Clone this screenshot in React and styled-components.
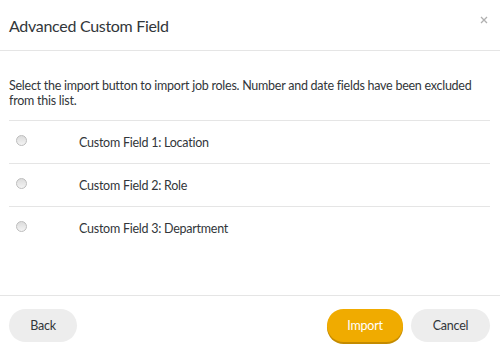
import React from "react";
import styled, { createGlobalStyle } from "styled-components";

const GlobalStyle = createGlobalStyle`
  html, body {
    margin: 0;
    padding: 0;
    background: #ffffff;
  }
  body {
    font-family: Lato, "Open Sans", sans-serif;
    color: #32363a;
  }
`;

const Dialog = styled.section`
  width: 500px;
  height: 354px;
  display: flex;
  flex-direction: column;
  background: #ffffff;
`;

const Header = styled.header`
  height: 51px;
  display: flex;
  align-items: center;
  justify-content: space-between;
  padding: 0 10px 0 9px;
  border-bottom: 1px solid #e5e5e5;
  box-sizing: border-box;
`;

const Title = styled.h1`
  margin: 0;
  font-size: 16px;
  letter-spacing: -0.3px;
  font-weight: 400;
  color: #32363a;
`;

const CloseButton = styled.button`
  border: 0;
  background: none;
  padding: 0;
  width: 12px;
  height: 12px;
  margin-top: -10px;
  display: flex;
  cursor: pointer;
`;

const Body = styled.div`
  flex: 1;
  padding: 27px 10px 0 9px;
`;

const Description = styled.p`
  margin: 0 0 12px;
  font-size: 12.5px;
  letter-spacing: -0.25px;
  line-height: 15px;
  color: #32363a;
`;

const List = styled.ul`
  list-style: none;
  margin: 0;
  padding: 0;
  border-top: 1px solid #e5e5e5;
`;

const Row = styled.li`
  height: 42px;
  display: flex;
  align-items: center;
  border-bottom: ${(p) => (p.$last ? "0" : "1px solid #e5e5e5")};
`;

const Radio = styled.span`
  width: 9px;
  height: 9px;
  margin-left: 7px;
  margin-right: 52px;
  margin-top: -4px;
  border-radius: 50%;
  border: 1px solid #bdbdbd;
  background: linear-gradient(#dcdcdc, #f4f4f4);
`;

const Label = styled.span`
  font-size: 12.5px;
  letter-spacing: -0.25px;
  color: #32363a;
`;

const Footer = styled.footer`
  height: 58px;
  border-top: 1px solid #e5e5e5;
  display: flex;
  align-items: center;
  padding: 0 10px 0 9px;
  gap: 8px;
`;

const Spacer = styled.div`
  flex: 1;
`;

const Button = styled.button`
  height: 33px;
  min-width: ${(p) => p.$width}px;
  border: 0;
  border-radius: 17px;
  font-family: inherit;
  font-size: 12.5px;
  letter-spacing: -0.2px;
  cursor: pointer;
  background: ${(p) => (p.$primary ? "#f0ab00" : "#ededed")};
  color: ${(p) => (p.$primary ? "#ffffff" : "#32363a")};
  box-shadow: ${(p) => (p.$primary ? "0 2px 0 #c48b00" : "none")};
`;

const fields = [
  "Custom Field 1: Location",
  "Custom Field 2: Role",
  "Custom Field 3: Department",
];

export default function App() {
  return (
    <>
      <GlobalStyle />
      <Dialog>
        <Header>
          <Title>Advanced Custom Field</Title>
          <CloseButton aria-label="Close">
            <svg width="12" height="12" viewBox="0 0 12 12">
              <path d="M3 3 L9 9 M9 3 L3 9" stroke="#b0b0b0" strokeWidth="1.3" />
            </svg>
          </CloseButton>
        </Header>
        <Body>
          <Description>
            Select the import button to import job roles. Number and date fields have been excluded
            from this list.
          </Description>
          <List>
            {fields.map((f, i) => (
              <Row key={f} $last={i === fields.length - 1}>
                <Radio />
                <Label>{f}</Label>
              </Row>
            ))}
          </List>
        </Body>
        <Footer>
          <Button $width={68}>Back</Button>
          <Spacer />
          <Button $width={76} $primary>
            Import
          </Button>
          <Button $width={79}>Cancel</Button>
        </Footer>
      </Dialog>
    </>
  );
}
